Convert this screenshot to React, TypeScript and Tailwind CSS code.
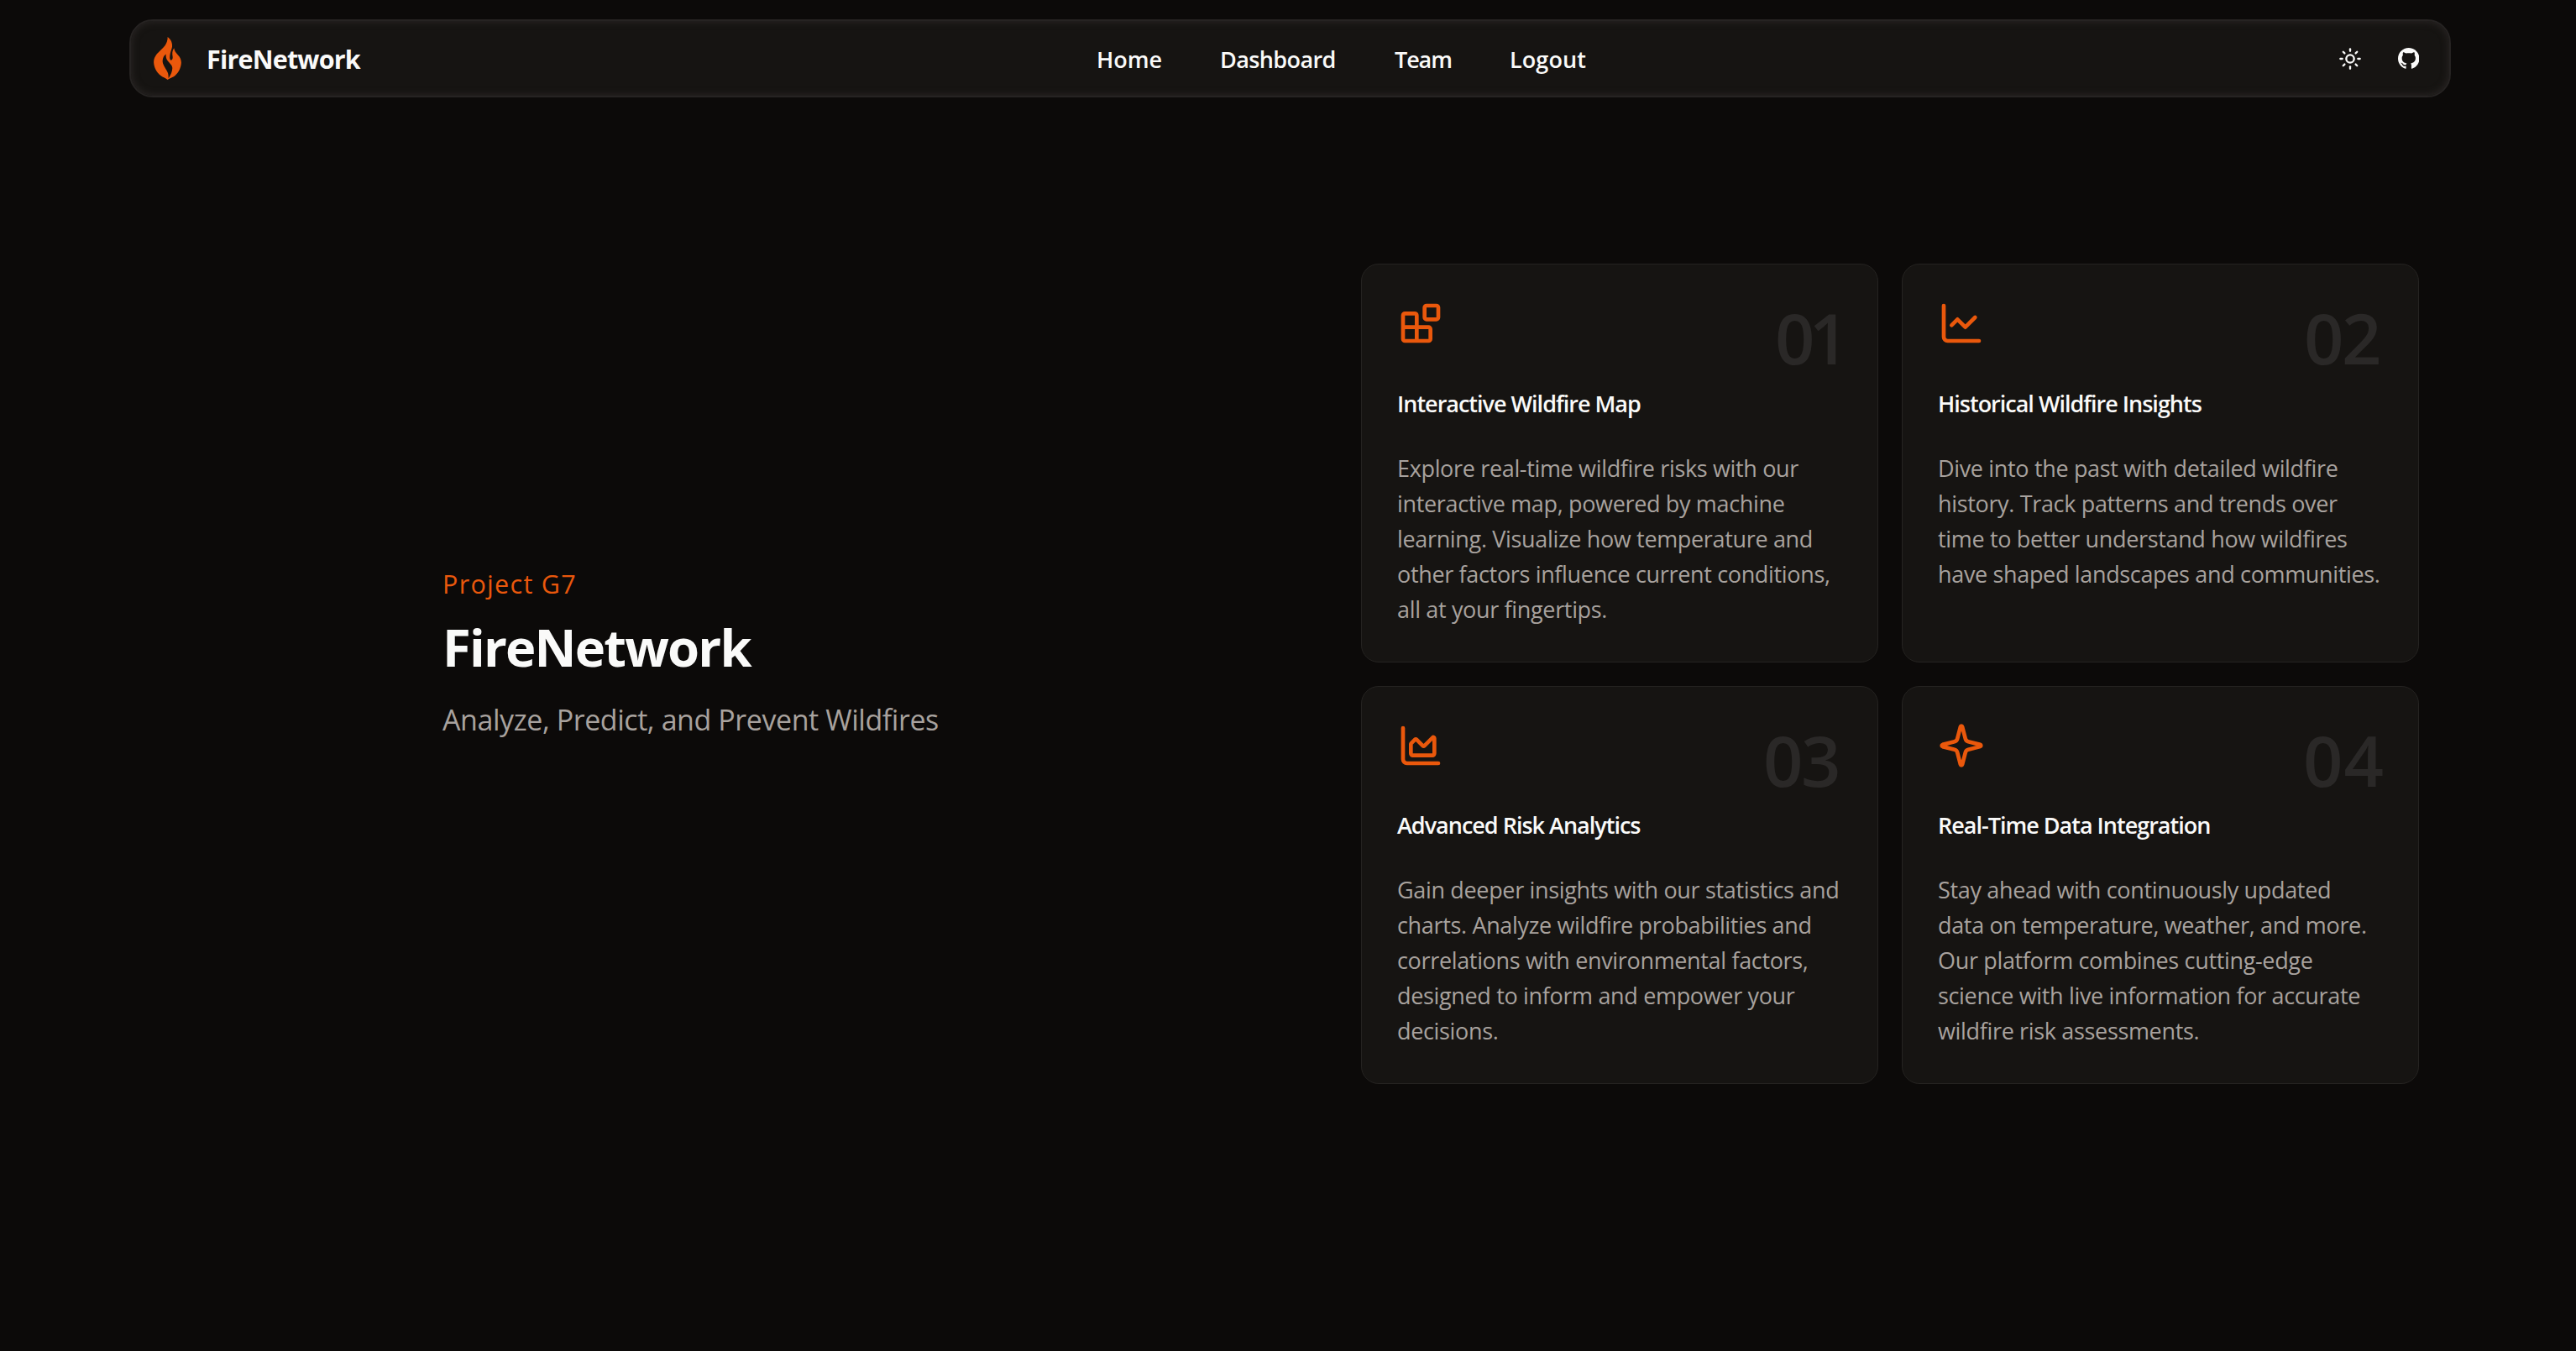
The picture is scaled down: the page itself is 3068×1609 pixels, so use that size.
import { ReactNode } from "react";

type Feature = {
    number: string;
    numberClass: string;
    title: string;
    lines: string[];
    icon: ReactNode;
};

const navLinks = [
    { label: "Home", className: "w-[147px]" },
    { label: "Dashboard", className: "w-[208px] tracking-[-0.6px]" },
    { label: "Team", className: "w-[137px] tracking-[-1.1px]" },
    { label: "Logout", className: "w-[95px] tracking-[0.1px]" },
];

const features: Feature[] = [
    {
        number: "01",
        numberClass: "tracking-[-7px] mr-[-1px]",
        title: "Interactive Wildfire Map",
        lines: [
            "Explore real-time wildfire risks with our",
            "interactive map, powered by machine",
            "learning. Visualize how temperature and",
            "other factors influence current conditions,",
            "all at your fingertips.",
        ],
        icon: (
            <>
                <rect width="7" height="7" x="14" y="3" rx="1" />
                <path d="M10 21V8a1 1 0 0 0-1-1H4a1 1 0 0 0-1 1v12a1 1 0 0 0 1 1h12a1 1 0 0 0 1-1v-5a1 1 0 0 0-1-1H3" />
            </>
        ),
    },
    {
        number: "02",
        numberClass: "tracking-[-2.5px] mr-1",
        title: "Historical Wildfire Insights",
        lines: [
            "Dive into the past with detailed wildfire",
            "history. Track patterns and trends over",
            "time to better understand how wildfires",
            "have shaped landscapes and communities.",
        ],
        icon: (
            <>
                <path d="M3 3v16a2 2 0 0 0 2 2h16" />
                <path d="m19 9-5 5-4-4-3 3" />
            </>
        ),
    },
    {
        number: "03",
        numberClass: "tracking-[-2.5px] mr-1",
        title: "Advanced Risk Analytics",
        lines: [
            "Gain deeper insights with our statistics and",
            "charts. Analyze wildfire probabilities and",
            "correlations with environmental factors,",
            "designed to inform and empower your",
            "decisions.",
        ],
        icon: (
            <>
                <path d="M3 3v16a2 2 0 0 0 2 2h16" />
                <path d="M7 11.207a.5.5 0 0 1 .146-.353l2-2a.5.5 0 0 1 .708 0l3.292 3.292a.5.5 0 0 0 .708 0l4.292-4.292a.5.5 0 0 1 .854.353V16a1 1 0 0 1-1 1H8a1 1 0 0 1-1-1z" />
            </>
        ),
    },
    {
        number: "04",
        numberClass: "tracking-[1px] -mr-[2px]",
        title: "Real-Time Data Integration",
        lines: [
            "Stay ahead with continuously updated",
            "data on temperature, weather, and more.",
            "Our platform combines cutting-edge",
            "science with live information for accurate",
            "wildfire risk assessments.",
        ],
        icon: (
            <path d="M9.937 15.5A2 2 0 0 0 8.5 14.063l-6.135-1.582a.5.5 0 0 1 0-.962L8.5 9.936A2 2 0 0 0 9.937 8.5l1.582-6.135a.5.5 0 0 1 .963 0L14.063 8.5A2 2 0 0 0 15.5 9.937l6.135 1.581a.5.5 0 0 1 0 .964L15.5 14.063a2 2 0 0 0-1.437 1.437l-1.582 6.135a.5.5 0 0 1-.963 0z" />
        ),
    },
];

function FlameLogo() {
    return (
        <svg viewBox="0 0 99 154" className="w-[33px] h-[51px] shrink-0">
            <path
                fill="#ea580c"
                d="M50 0C62 9 68 22 66 36C64 46 59 56 58 68C57 76 58 83 62 84C67 83 69 77 68 71C66 60 66 50 73 40C74 50 80 57 87 65C95 73 99 82 99 93C98 114 86 133 72 143C63 148 55 150 50 154C44 149 33 145 25 139C10 127 1 110 0 91C0 74 9 62 21 51C36 38 50 25 50 0Z"
            />
            <path
                fill="#161412"
                d="M44 62C34 69 30 82 33 95C37 108 47 118 51 130C53 138 53 144 53 149C61 138 67 124 67 112C66 101 58 96 51 87C45 80 43 71 44 62Z"
            />
        </svg>
    );
}

function SunIcon() {
    return (
        <svg viewBox="0 0 24 24" fill="none" stroke="currentColor" strokeWidth="2" strokeLinecap="round" strokeLinejoin="round" className="size-7">
            <circle cx="12" cy="12" r="4" />
            <path d="M12 2v2" />
            <path d="M12 20v2" />
            <path d="m4.93 4.93 1.41 1.41" />
            <path d="m17.66 17.66 1.41 1.41" />
            <path d="M2 12h2" />
            <path d="M20 12h2" />
            <path d="m6.34 17.66-1.41 1.41" />
            <path d="m19.07 4.93-1.41 1.41" />
        </svg>
    );
}

function GithubIcon() {
    return (
        <svg viewBox="0 0 16 16" fill="currentColor" className="size-[25.5px]">
            <path d="M8 0C3.58 0 0 3.58 0 8c0 3.54 2.29 6.53 5.47 7.59.4.07.55-.17.55-.38 0-.19-.01-.82-.01-1.49-2.01.37-2.53-.49-2.69-.94-.09-.23-.48-.94-.82-1.13-.28-.15-.68-.52-.01-.53.63-.01 1.08.58 1.23.82.72 1.21 1.87.87 2.33.66.07-.52.28-.87.51-1.07-1.78-.2-3.64-.89-3.64-3.95 0-.87.31-1.59.82-2.15-.08-.2-.36-1.02.08-2.12 0 0 .67-.21 2.2.82.64-.18 1.32-.27 2-.27.68 0 1.36.09 2 .27 1.53-1.04 2.2-.82 2.2-.82.44 1.1.16 1.92.08 2.12.51.56.82 1.27.82 2.15 0 3.07-1.87 3.75-3.65 3.95.29.25.54.73.54 1.48 0 1.07-.01 1.93-.01 2.2 0 .21.15.46.55.38A8.013 8.013 0 0 0 16 8c0-4.42-3.58-8-8-8z" />
        </svg>
    );
}

function Navbar() {
    return (
        <header className="ml-[154px] w-[2765px] h-[93px] flex items-center justify-between pl-[27px] pr-9 rounded-[28px] border-2 border-[#262322] bg-[#161412] shadow-[inset_0_0_8px_1px_#292524]">
            <div className="flex items-center w-[1123px]">
                <FlameLogo />
                <span className="ml-[30px] pt-0.5 text-[30.5px] font-bold tracking-[-0.8px]">FireNetwork</span>
            </div>
            <nav className="flex grow pt-0.5 text-[27px] leading-[42px] font-semibold">
                {navLinks.map((link) => (
                    <a key={link.label} href="#" className={link.className}>{link.label}</a>
                ))}
            </nav>
            <div className="flex items-center gap-[43px]">
                <SunIcon />
                <GithubIcon />
            </div>
        </header>
    );
}

function FeatureCard({ feature }: { feature: Feature }) {
    return (
        <article className="rounded-[21px] border border-[#252321] bg-[#161412] p-[42px]">
            <div className="flex justify-between h-[84.4px]">
                <svg viewBox="0 0 24 24" fill="none" stroke="currentColor" strokeWidth="2" strokeLinecap="round" strokeLinejoin="round" className="size-14 text-[#ea580c]">
                    {feature.icon}
                </svg>
                <span className={`pt-[3px] text-[83px] leading-[84px] font-semibold text-[#2a2827] ${feature.numberClass}`}>
                    {feature.number}
                </span>
            </div>
            <h3 className="mt-[25px] text-[27px] leading-7 font-semibold tracking-[-1px]">{feature.title}</h3>
            <p className="mt-[42px] text-[27px] leading-[42px] tracking-[-0.34px] whitespace-nowrap text-[#a8a29e]">
                {feature.lines.map((line) => (
                    <span key={line} className="block">{line}</span>
                ))}
            </p>
        </article>
    );
}

export default function App() {
    return (
        <div className="w-full h-[1609px] pt-[23px] overflow-hidden bg-[#0c0a09] text-[#fafaf9] font-['Open_Sans','Noto_Sans',sans-serif]">
            <Navbar />
            <main className="flex mt-[198.3px] ml-[527px]">
                <section className="w-[1094px] pt-[360px]">
                    <p className="text-[30.5px] leading-[42px] tracking-[1.3px] text-[#ea580c]">Project G7</p>
                    <h1 className="mt-[23px] text-[61.5px] leading-[63px] font-bold tracking-[-1.8px]">FireNetwork</h1>
                    <p className="mt-[31px] text-[34px] leading-[49px] tracking-[-0.43px] text-[#a8a29e]">
                        Analyze, Predict, and Prevent Wildfires
                    </p>
                </section>
                <section className="grid grid-cols-[616px_616px] grid-rows-[474.6px_474.6px] gap-7">
                    {features.map((feature) => (
                        <FeatureCard key={feature.number} feature={feature} />
                    ))}
                </section>
            </main>
        </div>
    );
}
